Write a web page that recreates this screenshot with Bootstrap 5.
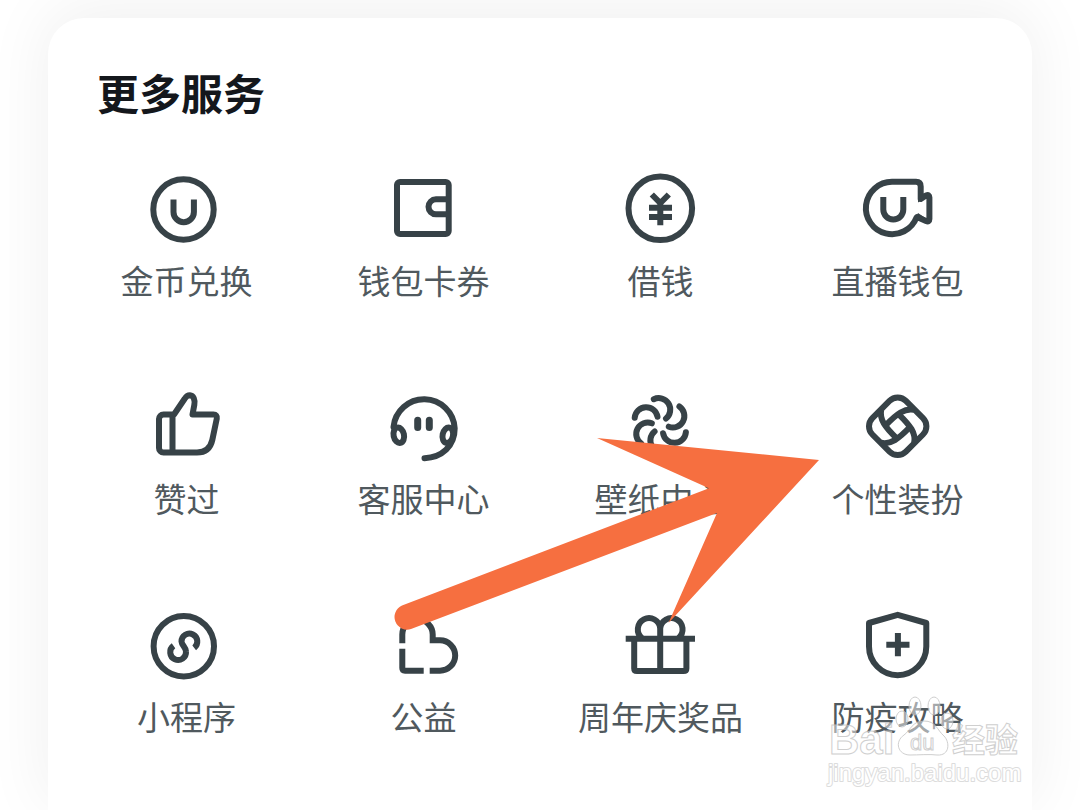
<!DOCTYPE html>
<html lang="zh-CN">
<head>
<meta charset="utf-8">
<meta name="viewport" content="width=device-width, initial-scale=1">
<title>更多服务</title>
<link href="https://cdn.jsdelivr.net/npm/bootstrap@5.3.0/dist/css/bootstrap.min.css" rel="stylesheet">
<script src="https://cdn.jsdelivr.net/npm/bootstrap@5.3.0/dist/js/bootstrap.bundle.min.js" defer></script>
<style>
  body { background: #fff; font-family: "Noto Sans CJK SC", sans-serif; overflow-x: hidden; }
  .page { padding: 18px 48px 0; overflow: hidden; }
  .panel { background: #fff; border-radius: 36px 36px 0 0; box-shadow: 0 -8px 64px 4px rgba(0, 0, 0, .06); padding: 49px 16px 24px 20px; }
  .panel-title { color: #14171c; font-size: 42px; line-height: 50px; font-weight: 700; margin: 0 0 52px 29px; }
  .services { row-gap: 82px; }
  .service { color: #50595e; font-size: 33px; line-height: 44px; gap: 9px; padding-bottom: 3px; }
  .glyph { width: 81px; height: 80px; fill: none; stroke: #374247; stroke-width: 6; }
  .pointer { left: 342px; top: 416px; width: 432px; height: 200px; pointer-events: none; }
  .watermark { right: 8px; top: 672px; width: 200px; height: 100px; pointer-events: none; overflow: visible; }
</style>
</head>
<body>
<main class="page min-vh-100 d-flex flex-column">
  <section class="panel position-relative flex-grow-1">
    <h1 class="panel-title">更多服务</h1>
    <nav class="services row row-cols-4 g-0" aria-label="更多服务">
      <a href="#" class="service col d-flex flex-column align-items-center text-decoration-none text-nowrap">
        <svg class="glyph" viewBox="0 0 81 80"><circle cx="37.5" cy="40.5" r="30.2"/><path d="M27.5 30.5V43a10.2 10.2 0 0 0 20.4 0V30.5"/></svg>
        <span>金币兑换</span>
      </a>
      <a href="#" class="service col d-flex flex-column align-items-center text-decoration-none text-nowrap">
        <svg class="glyph" viewBox="0 0 81 80"><rect x="14" y="13" width="51.7" height="52" rx="3"/><path d="M66 30.3H53a7.5 7.5 0 0 0 0 15H66"/></svg>
        <span>钱包卡券</span>
      </a>
      <a href="#" class="service col d-flex flex-column align-items-center text-decoration-none text-nowrap">
        <svg class="glyph" viewBox="0 0 81 80"><circle cx="40.3" cy="39.3" r="31.8"/><path d="M31.8 25.5L40.3 34L48.8 25.5M29 38.8H52M29 48H52M40.3 34V56.3"/></svg>
        <span>借钱</span>
      </a>
      <a href="#" class="service col d-flex flex-column align-items-center text-decoration-none text-nowrap">
        <svg class="glyph" viewBox="0 0 81 80"><path stroke-linejoin="round" d="M59.5 48.5A26.2 26.2 0 1 1 35 12.8H59Q63.7 12.8 63.7 17.5V30L69 26.5Q72.4 25 72.4 28.5V50Q72.4 53.5 69 52L60 48Z"/><path fill="#374247" stroke="none" d="M61 24V33.5L70 27.5L65 24ZM61 44L70 50L66 53L58 50Z"/><path d="M26.3 28V40.5a10 10 0 0 0 20 0V28"/></svg>
        <span>直播钱包</span>
      </a>
      <a href="#" class="service col d-flex flex-column align-items-center text-decoration-none text-nowrap">
        <svg class="glyph" viewBox="0 0 81 80"><path stroke-linejoin="round" d="M28 27.5H17.5a4.5 4.5 0 0 0-4.5 4.5V61a4.5 4.5 0 0 0 4.5 4.5H51C59 65.5 64.5 61 66.3 53L70.8 31.5C71.3 29 70 27.5 67.5 27.5H46.5L48.300 18C49.300 12.500 47.500 8.500 43.800 8.200C41.500 8.200 40 9.500 38.500 12ZM26.500 27V65"/></svg>
        <span>赞过</span>
      </a>
      <a href="#" class="service col d-flex flex-column align-items-center text-decoration-none text-nowrap">
        <svg class="glyph" viewBox="0 0 81 80" stroke-linecap="round"><path d="M10.500 40A30.700 30.700 0 0 1 71.700 41.300C71.700 59 59 70.500 41.500 71.200"/><ellipse cx="15.800" cy="48.300" rx="5.200" ry="7.800" transform="rotate(-12 15.800 48.300)"/><ellipse cx="64.800" cy="48.300" rx="5.200" ry="7.800" transform="rotate(12 64.800 48.300)"/><path stroke-width="7" d="M34.700 33.200V40.500M46.300 33.200V40.500"/></svg>
        <span>客服中心</span>
      </a>
      <a href="#" class="service col d-flex flex-column align-items-center text-decoration-none text-nowrap">
        <svg class="glyph" viewBox="0 0 81 80" stroke-linecap="round">
          <defs><path id="petal" d="M-6.500 -25.800A11.500 11.500 0 0 1 5.700 -6.500"/></defs>
          <g transform="translate(40.300 38)"><use href="#petal"/><use href="#petal" transform="rotate(60)"/><use href="#petal" transform="rotate(120)"/><use href="#petal" transform="rotate(180)"/><use href="#petal" transform="rotate(240)"/><use href="#petal" transform="rotate(300)"/></g>
        </svg>
        <span>壁纸中心</span>
      </a>
      <a href="#" class="service col d-flex flex-column align-items-center text-decoration-none text-nowrap">
        <svg class="glyph" viewBox="0 0 81 80">
          <defs><path id="swirl" d="M16.500 -16.500C7 -18.500 -1 -12.500 -12 -1"/></defs>
          <g transform="translate(40.700 39.300)"><rect x="-23.700" y="-23.700" width="47.400" height="47.400" rx="11.600" transform="rotate(45)"/><use href="#swirl"/><use href="#swirl" transform="rotate(90)"/><use href="#swirl" transform="rotate(180)"/><use href="#swirl" transform="rotate(270)"/></g>
        </svg>
        <span>个性装扮</span>
      </a>
      <a href="#" class="service col d-flex flex-column align-items-center text-decoration-none text-nowrap">
        <svg class="glyph" viewBox="0 0 81 80"><circle cx="37.800" cy="41.200" r="30.200"/><path d="M48.200 42.800A7.900 7.900 0 1 0 35.500 36.500C35.800 40.500 39.800 42 40 46.500A7.900 7.900 0 1 1 27.500 40.700"/></svg>
        <span>小程序</span>
      </a>
      <a href="#" class="service col d-flex flex-column align-items-center text-decoration-none text-nowrap">
        <svg class="glyph" viewBox="0 0 81 80"><path d="M19.300 38.300V29.500a15.200 15.200 0 0 1 30.400 0V35.300H57a15.200 15.200 0 0 1 0 30.400H46.700M40.700 65.700H22Q19.300 65.700 19.300 63V43.700"/></svg>
        <span>公益</span>
      </a>
      <a href="#" class="service col d-flex flex-column align-items-center text-decoration-none text-nowrap">
        <svg class="glyph" viewBox="0 0 81 80"><path d="M5.700 33.800H75M14.200 34V63.500Q14.200 66 17 66H63.500Q66.400 66 66.400 63.500V34M40.200 22V66M22 33A11.200 11.200 0 1 1 40.200 23.500A11.200 11.200 0 1 1 58.500 33"/></svg>
        <span>周年庆奖品</span>
      </a>
      <a href="#" class="service col d-flex flex-column align-items-center text-decoration-none text-nowrap">
        <svg class="glyph" viewBox="0 0 81 80"><path stroke-linejoin="round" d="M40.700 9.800L69.300 18V41.500A28.600 28.600 0 0 1 12 41.500V18Z"/><path d="M29.300 39.700H52.500M40.900 28V51.300"/></svg>
        <span>防疫攻略</span>
      </a>
    </nav>

    <!-- arrow pointing at 个性装扮 -->
    <svg class="pointer position-absolute" viewBox="390 434 432 200" aria-hidden="true">
      <path fill="#f66f40" d="M819 460L597 438L709 488.300L402 605.500A12.600 12.600 0 0 0 411 629L717 513L668.500 623Z"/>
    </svg>

    <svg class="watermark position-absolute" viewBox="824 690 200 100" opacity=".8">
      <g fill="#fff" fill-opacity=".6" stroke="#c4c4c4" stroke-width="1">
        <ellipse cx="915" cy="706" rx="6" ry="9"/><ellipse cx="934" cy="706" rx="6" ry="9"/>
        <ellipse cx="902" cy="719" rx="6" ry="8"/><ellipse cx="947" cy="721" rx="6" ry="8"/>
        <path d="M924 721C912 721 911 730 904 735C894 742 898 755 910 755C918 755 930 754 937 755C950 756 950 742 944 736C937 730 936 721 924 721Z"/>
        <text x="829" y="754" font-family="Liberation Sans, sans-serif" font-weight="700" font-size="42">Bai</text>
        <text x="910" y="750" font-family="Liberation Sans, sans-serif" font-size="22">du</text>
        <text x="952" y="752" font-family="Noto Sans CJK SC, sans-serif" font-weight="700" font-size="33">经验</text>
      </g>
      <text x="828" y="781" font-family="Liberation Sans, sans-serif" font-size="24" fill="#fff" stroke="#d4d4d4" stroke-width="2" stroke-linejoin="round" paint-order="stroke">jingyan.baidu.com</text>
    </svg>
  </section>
</main>
</body>
</html>
